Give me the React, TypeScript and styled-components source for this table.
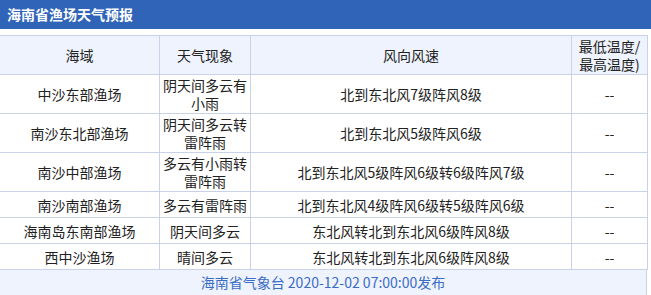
import React from "react";
import styled, { createGlobalStyle } from "styled-components";

const GlobalStyle = createGlobalStyle`
  html, body {
    margin: 0;
    padding: 0;
    background: #ffffff;
  }
  body {
    font-family: "Noto Sans CJK SC", "Noto Sans", sans-serif;
    color: #222222;
  }
`;

const Panel = styled.div`
  width: 651px;
  height: 295px;
  overflow: hidden;
`;

const TitleBar = styled.div`
  height: 29px;
  background-color: #3064b8;
  color: #ffffff;
  font-size: 14px;
  font-weight: 700;
  line-height: 29px;
  padding-left: 7px;
  margin-bottom: 6px;
`;

const Table = styled.table`
  width: 648px;
  margin-left: -1px;
  border-collapse: collapse;
  table-layout: fixed;
  font-size: 14px;
`;

const HeadRow = styled.tr`
  background-color: #eef3fd;
`;

const Cell = styled.td<{ $width?: number }>`
  box-sizing: border-box;
  width: ${props => (props.$width ? `${props.$width}px` : "auto")};
  height: 26px;
  padding: 1px 3px;
  line-height: 18px;
  text-align: center;
  vertical-align: middle;
  border: 1px solid #c8d3ea;
  font-weight: 400;
`;

const Footer = styled.div`
  width: 646px;
  height: 26px;
  background-color: #eef3fd;
  border-right: 1px solid #c8d3ea;
  color: #3a6cc6;
  font-size: 14px;
  line-height: 24px;
  text-align: center;
`;

type FishingArea = {
  area: string;
  weather: string;
  wind: string;
  temp: string;
};

const rows: FishingArea[] = [
  { area: "中沙东部渔场", weather: "阴天间多云有小雨", wind: "北到东北风7级阵风8级", temp: "--" },
  { area: "南沙东北部渔场", weather: "阴天间多云转雷阵雨", wind: "北到东北风5级阵风6级", temp: "--" },
  { area: "南沙中部渔场", weather: "多云有小雨转雷阵雨", wind: "北到东北风5级阵风6级转6级阵风7级", temp: "--" },
  { area: "南沙南部渔场", weather: "多云有雷阵雨", wind: "北到东北风4级阵风6级转5级阵风6级", temp: "--" },
  { area: "海南岛东南部渔场", weather: "阴天间多云", wind: "东北风转北到东北风6级阵风8级", temp: "--" },
  { area: "西中沙渔场", weather: "晴间多云", wind: "东北风转北到东北风6级阵风8级", temp: "--" },
];

const App = () => {
  return (
    <>
      <GlobalStyle />
      <Panel>
        <TitleBar>海南省渔场天气预报</TitleBar>
        <Table>
          <thead>
            <HeadRow>
              <Cell as="th" $width={160}>海域</Cell>
              <Cell as="th" $width={91}>天气现象</Cell>
              <Cell as="th" $width={321}>风向风速</Cell>
              <Cell as="th" $width={76}>最低温度/最高温度)</Cell>
            </HeadRow>
          </thead>
          <tbody>
            {rows.map(row => (
              <tr key={row.area}>
                <Cell>{row.area}</Cell>
                <Cell>{row.weather}</Cell>
                <Cell>{row.wind}</Cell>
                <Cell>{row.temp}</Cell>
              </tr>
            ))}
          </tbody>
        </Table>
        <Footer>海南省气象台 2020-12-02 07:00:00发布</Footer>
      </Panel>
    </>
  );
};

export default App;
